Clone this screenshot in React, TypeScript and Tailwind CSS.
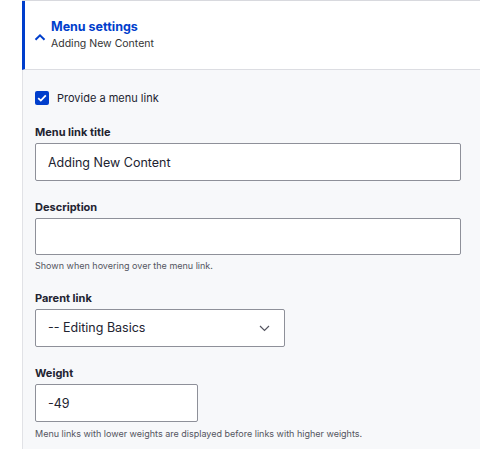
import { useState } from "react";

const font = { fontFamily: "Inter, 'Noto Sans', sans-serif" };

const App = () => {
  const [checked, setChecked] = useState<boolean>(true);

  return (
    <div className="w-[480px] h-[449px] bg-white overflow-hidden pl-[22px] text-[#222330]" style={font}>
      <div className="border-t border-[#d8d9de] h-full flex flex-col">
        {/* Summary header */}
        <div className="h-[69px] shrink-0 flex items-center bg-white border-l-[3px] border-[#003ecc] border-b border-b-[#dcdde2] pl-[9px]">
          <svg width="12" height="8" viewBox="0 0 12 8" className="mt-[3px]">
            <path d="M1.5 6.8L6 2.3L10.5 6.8" fill="none" stroke="#003ecc" strokeWidth="2" />
          </svg>
          <div className="ml-[5px] flex flex-col">
            <span className="text-[12.5px] font-bold text-[#003ecc] leading-[18px]">Menu settings</span>
            <span className="text-[10.5px] text-[#333] leading-[16px]">Adding New Content</span>
          </div>
        </div>

        {/* Details body */}
        <div className="flex-1 bg-[#f7f8fa] border-l border-[#e1e2e6] pl-[12px] pr-[19px] pt-[21px]">
          <label className="flex items-center gap-[8px] cursor-pointer">
            <input
              type="checkbox"
              checked={checked}
              onChange={() => setChecked(!checked)}
              className="sr-only"
            />
            <span className="w-[14px] h-[14px] rounded-[2px] bg-[#003ecc] flex items-center justify-center">
              {checked && (
                <svg width="10" height="8" viewBox="0 0 10 8">
                  <path d="M1.2 4.2L3.8 6.6L8.8 1.4" fill="none" stroke="#fff" strokeWidth="1.8" />
                </svg>
              )}
            </span>
            <span className="text-[11px] leading-[14px]">Provide a menu link</span>
          </label>

          <div className="mt-[20px] text-[11px] font-bold leading-[14px]">Menu link title</div>
          <input
            type="text"
            defaultValue="Adding New Content"
            className="mt-[4px] w-full h-[38px] bg-white border border-[#8e9099] rounded-[2px] px-[12px] text-[12.5px] outline-none"
          />

          <div className="mt-[19px] text-[11px] font-bold leading-[14px]">Description</div>
          <input
            type="text"
            className="mt-[4px] w-full h-[37px] bg-white border border-[#8e9099] rounded-[2px] px-[12px] text-[12.5px] outline-none"
          />
          <p className="mt-[5px] text-[9px] leading-[12px] text-[#545560]">Shown when hovering over the menu link.</p>

          <div className="mt-[19px] text-[11px] font-bold leading-[14px]">Parent link</div>
          <div className="mt-[4px] w-[250px] h-[38px] bg-white border border-[#8e9099] rounded-[2px] pl-[12px] pr-[14px] flex items-center justify-between">
            <span className="text-[12.5px]">-- Editing Basics</span>
            <svg width="11" height="7" viewBox="0 0 11 7">
              <path d="M1 1L5.5 5.5L10 1" fill="none" stroke="#545560" strokeWidth="1.2" />
            </svg>
          </div>

          <div className="mt-[19px] text-[11px] font-bold leading-[14px]">Weight</div>
          <input
            type="text"
            defaultValue="-49"
            className="mt-[4px] w-[163px] h-[38px] bg-white border border-[#8e9099] rounded-[2px] px-[12px] text-[12.5px] outline-none"
          />
          <p className="mt-[6px] text-[9px] leading-[12px] text-[#545560]">
            Menu links with lower weights are displayed before links with higher weights.
          </p>
        </div>
      </div>
    </div>
  );
};

export default App;
